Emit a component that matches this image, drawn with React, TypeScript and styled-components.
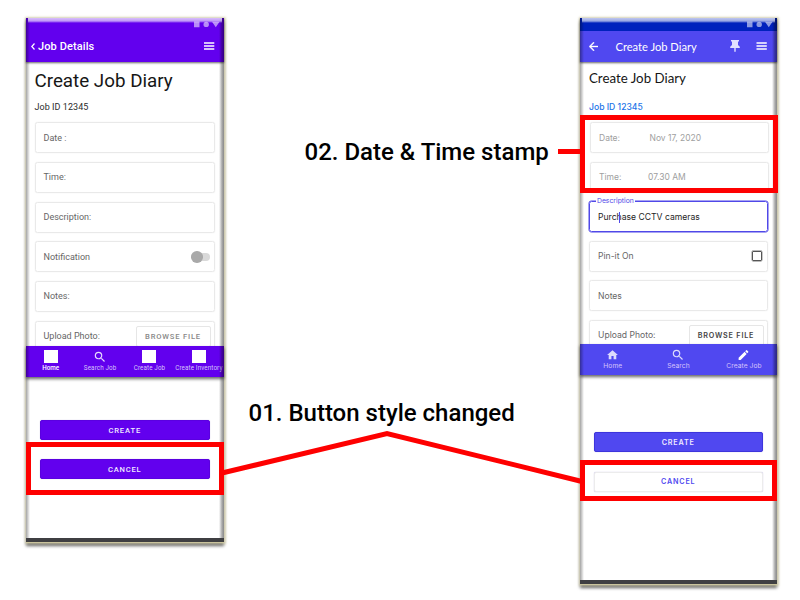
import React from "react";
import styled, { createGlobalStyle, css } from "styled-components";

const Global = createGlobalStyle`
  * { box-sizing: border-box; }
  body { margin: 0; background: #fff; }
`;

const roboto = 'Roboto, "Liberation Sans", sans-serif';
const inter = 'Inter, Roboto, sans-serif';
const lato = 'Lato, Roboto, sans-serif';

const Board = styled.main`
  position: relative;
  width: 800px;
  height: 600px;
  overflow: hidden;
  display: flex;
  justify-content: space-between;
  align-items: flex-start;
  padding: 18px 23px 0 26px;
  background: #fff;
  font-family: ${roboto};
`;

const Phone = styled.section<{ $w: number; $h: number; $font: string }>`
  position: relative;
  display: flex;
  flex-direction: column;
  width: ${(p) => p.$w}px;
  height: ${(p) => p.$h}px;
  background: #fff;
  font-family: ${(p) => p.$font};
  white-space: nowrap;
  box-shadow: 0 0 2px 1.5px rgba(214, 208, 168, 0.7), 0 1px 0 0 #b5af8a, 0 4px 3px 0 rgba(0, 0, 0, 0.6);
  &::after {
    content: "";
    position: absolute;
    inset: 0;
    pointer-events: none;
    background:
      linear-gradient(#3f3f42, #3f3f42) bottom / 100% 4px no-repeat,
      linear-gradient(rgba(255, 255, 255, 0.75), rgba(255, 255, 255, 0.6) 3px, transparent 5px) 2px 0 / calc(100% - 4px) 5px no-repeat,
      linear-gradient(to right, rgba(0, 0, 0, 0.36), rgba(0, 0, 0, 0.18) 2px, transparent 4px),
      linear-gradient(to left, rgba(0, 0, 0, 0.46), rgba(0, 0, 0, 0.34) 2px, transparent 5px);
  }
`;

const Header = styled.header<{ $color: string }>`
  flex: none;
  height: 43.5px;
  background: ${(p) => p.$color};
  color: #fff;
  box-shadow: 0 1px 2px rgba(0, 0, 0, 0.6);
`;

const StatusBar = styled.div<{ $color: string }>`
  height: 13px;
  background: ${(p) => p.$color};
  display: flex;
  justify-content: flex-end;
  padding: 3px 4px 0 0;
`;

const Toolbar = styled.div<{ $pad: string }>`
  height: 30.5px;
  display: flex;
  align-items: center;
  padding: ${(p) => p.$pad};
`;

const BarTitle = styled.h2<{ $size: number; $font: string; $weight: number; $ls: number; $ml: number }>`
  margin: 1px auto 0 ${(p) => p.$ml}px;
  font: ${(p) => p.$weight} ${(p) => p.$size}px/14px ${(p) => p.$font};
  letter-spacing: ${(p) => p.$ls}px;
`;

const Body = styled.div<{ $h: number; $x: number }>`
  flex: none;
  height: ${(p) => p.$h}px;
  overflow: hidden;
  padding: 0 9px 0 ${(p) => p.$x}px;
`;

const Title = styled.h1<{ $size: number; $font: string; $top: number; $ls: number }>`
  margin: ${(p) => p.$top}px 0 0;
  height: 24px;
  font: 400 ${(p) => p.$size}px/24px ${(p) => p.$font};
  letter-spacing: ${(p) => p.$ls}px;
  color: #161616;
`;

const JobId = styled.p<{ $top: number; $color: string; $ls: number; $size: number; $weight: number }>`
  margin: ${(p) => p.$top}px 0 0;
  height: 12px;
  line-height: 12px;
  font-size: ${(p) => p.$size}px;
  font-weight: ${(p) => p.$weight};
  letter-spacing: ${(p) => p.$ls}px;
  color: ${(p) => p.$color};
`;

const Fields = styled.div<{ $top: number; $gap: number }>`
  margin-top: ${(p) => p.$top}px;
  display: flex;
  flex-direction: column;
  gap: ${(p) => p.$gap}px;
`;

const Field = styled.div<{ $active?: boolean; $muted?: boolean; $shift?: number }>`
  position: relative;
  flex: none;
  display: flex;
  align-items: center;
  height: 31px;
  margin: 0 ${(p) => -(p.$shift ?? 0)}px 0 ${(p) => p.$shift ?? 0}px;
  padding: 0 8px;
  border: 1px solid #e9e9e9;
  border-radius: 2.5px;
  box-shadow: 0 0 1px rgba(0, 0, 0, 0.12);
  color: ${(p) => (p.$muted ? "#a0a0a0" : "#666")};
  ${(p) =>
    p.$active &&
    css`
      border-color: #5048e8;
      color: #242424;
      box-shadow: 0 0 0 0.5px #5048e8;
    `}
`;

const Label = styled.span<{ $size?: number; $ls?: number; $w?: number }>`
  font-size: ${(p) => p.$size ?? 9}px;
  line-height: 12px;
  letter-spacing: ${(p) => p.$ls ?? 0}px;
  ${(p) => p.$w && `width: ${p.$w}px;`}
`;

const Floating = styled.span`
  position: absolute;
  left: 6px;
  top: -6px;
  padding: 0 1px;
  background: #fff;
  font-size: 6.8px;
  line-height: 10px;
  color: #5048e8;
`;

const Caret = styled.i`
  position: absolute;
  left: 28.5px;
  top: 9.5px;
  width: 1px;
  height: 11px;
  background: #5048e8;
`;

const Toggle = styled.i`
  position: relative;
  margin-left: auto;
  margin-right: -4px;
  width: 17px;
  height: 7.5px;
  border-radius: 4px;
  background: #d9d9d9;
  &::before {
    content: "";
    position: absolute;
    left: -2px;
    top: -2px;
    width: 11.5px;
    height: 11.5px;
    border-radius: 50%;
    background: #a9a9a9;
  }
`;

const CheckBox = styled.i`
  margin-left: auto;
  margin-right: -3px;
  width: 10px;
  height: 10px;
  border: 1px solid #555;
  border-radius: 1px;
  box-shadow: 0 0 0 0.4px #777;
`;

const Browse = styled.button<{ $color: string; $weight: number; $ls: number; $size: number; $mr: number }>`
  align-self: flex-start;
  margin: 4.5px ${(p) => p.$mr}px 0 auto;
  width: 75px;
  height: 21px;
  padding: 0;
  border: 1px solid #e6e6e6;
  border-radius: 2px;
  background: #fff;
  font-family: inherit;
  font-size: ${(p) => p.$size}px;
  font-weight: ${(p) => p.$weight};
  letter-spacing: ${(p) => p.$ls}px;
  color: ${(p) => p.$color};
`;

const Nav = styled.nav<{ $color: string; $cols: string }>`
  position: relative;
  flex: none;
  height: 31.5px;
  display: grid;
  grid-template-columns: ${(p) => p.$cols};
  background: ${(p) => p.$color};
  box-shadow: 0 2px 3px rgba(0, 0, 0, 0.6);
`;

const NavItem = styled.a<{ $active?: boolean; $ls: number; $size?: number }>`
  display: flex;
  flex-direction: column;
  align-items: center;
  padding-top: 4px;
  color: ${(p) => (p.$active ? "#fff" : "#d5c2fb")};
  font-size: ${(p) => p.$size ?? 6.3}px;
  font-weight: ${(p) => (p.$active ? 500 : 400)};
  line-height: 9px;
  letter-spacing: ${(p) => p.$ls}px;
  svg { display: block; height: 14px; }
`;

const Tile = styled.i`
  width: 14px;
  height: 13px;
  margin-bottom: 1px;
  background: #fff;
`;

const Actions = styled.div<{ $top: number; $gap: number }>`
  margin-top: ${(p) => p.$top}px;
  padding: 0 14px 0 13.5px;
  display: flex;
  flex-direction: column;
  gap: ${(p) => p.$gap}px;
`;

const Action = styled.button<{ $bg: string; $fg?: string; $edge: string; $ls: number; $size: number; $weight?: number }>`
  height: 20px;
  padding: 0;
  border: 1px solid ${(p) => p.$edge};
  border-radius: 2px;
  background: ${(p) => p.$bg};
  color: ${(p) => p.$fg ?? "#f0eaff"};
  font-family: inherit;
  font-size: ${(p) => p.$size}px;
  font-weight: ${(p) => p.$weight ?? 500};
  letter-spacing: ${(p) => p.$ls}px;
  box-shadow: 0 0 1px rgba(60, 40, 160, 0.4);
`;

const Mark = styled.div<{ $x: number; $y: number; $w: number; $h: number }>`
  position: absolute;
  left: ${(p) => p.$x}px;
  top: ${(p) => p.$y}px;
  width: ${(p) => p.$w}px;
  height: ${(p) => p.$h}px;
  border: 5px solid #fe0000;
`;

const Lines = styled.svg`
  position: absolute;
  left: 0;
  top: 0;
`;

const Note = styled.p<{ $x: number; $y: number; $ls: number }>`
  position: absolute;
  left: ${(p) => p.$x}px;
  top: ${(p) => p.$y}px;
  margin: 0;
  font: 500 24px/28px ${roboto};
  letter-spacing: ${(p) => p.$ls}px;
  color: #000;
  white-space: nowrap;
`;

const StatusGlyphs = () => (
  <svg width="27" height="7" viewBox="0 0 27 7" fill="#fff" fillOpacity=".55">
    <path d="M1 .5h5.5v5.7H1zM19 .8h7.5L22.8 6.2z" />
    <circle cx="13.2" cy="3.4" r="2.7" />
  </svg>
);

const Burger = () => (
  <svg width="11" height="8" viewBox="0 0 11 8" stroke="#fff" strokeWidth="1.5">
    <path d="M0 1h10.3M0 4h10.3M0 7h10.3" />
  </svg>
);

const SearchIcon = ({ color }: { color: string }) => (
  <svg width="14" height="14" viewBox="0 0 24 24" fill={color}>
    <path d="M15.5 14h-.79l-.28-.27A6.47 6.47 0 0 0 16 9.5 6.5 6.5 0 1 0 9.5 16c1.61 0 3.09-.59 4.23-1.57l.27.28v.79l5 4.99L20.49 19l-4.99-5zm-6 0C7.01 14 5 11.99 5 9.5S7.01 5 9.5 5 14 7.01 14 9.5 11.99 14 9.5 14z" />
  </svg>
);

const HomeIcon = () => (
  <svg width="13" height="13" viewBox="0 0 24 24" fill="#dcdafc">
    <path d="M10 20v-6h4v6h5v-8h3L12 3 2 12h3v8z" />
  </svg>
);

const PencilIcon = () => (
  <svg width="13" height="13" viewBox="0 0 24 24" fill="#fff">
    <path d="M3 17.25V21h3.75L17.81 9.94l-3.75-3.75L3 17.25zM20.71 7.04a1 1 0 0 0 0-1.41l-2.34-2.34a1 1 0 0 0-1.41 0l-1.83 1.83 3.75 3.75 1.83-1.83z" />
  </svg>
);

const OldScreen = () => (
  <Phone $w={198} $h={524} $font={roboto}>
    <Header $color="#6200ee">
      <StatusBar $color="#6200ee"><StatusGlyphs /></StatusBar>
      <Toolbar $pad="0 9.5px 0 4.5px">
        <svg width="4" height="7" viewBox="0 0 4 7" fill="none" stroke="#fff" strokeWidth="1.2"><path d="M3.5.5L.8 3.5l2.7 3" /></svg>
        <BarTitle $size={11} $font={roboto} $weight={500} $ls={0.1} $ml={3.5}>Job Details</BarTitle>
        <Burger />
      </Toolbar>
    </Header>
    <Body $h={284} $x={8.5}>
      <Title $size={18.8} $font={roboto} $top={7.5} $ls={0}>Create Job Diary</Title>
      <JobId $top={8} $color="#2c2c2c" $ls={0.05} $size={9} $weight={400}>Job ID 12345</JobId>
      <Fields $top={9.2} $gap={8.7}>
        <Field><Label>Date :</Label></Field>
        <Field><Label>Time:</Label></Field>
        <Field><Label>Description:</Label></Field>
        <Field><Label>Notification</Label><Toggle /></Field>
        <Field><Label>Notes:</Label></Field>
        <Field><Label>Upload Photo:</Label><Browse $color="#888" $weight={500} $ls={0.8} $size={7.6} $mr={-4.5}>BROWSE FILE</Browse></Field>
      </Fields>
    </Body>
    <Nav $color="#6200ee" $cols="repeat(4, 49.4px)">
      <NavItem $active $ls={0}><Tile />Home</NavItem>
      <NavItem $ls={0.1}><SearchIcon color="#e6d9fd" />Search Job</NavItem>
      <NavItem $ls={0.1}><Tile />Create Job</NavItem>
      <NavItem $ls={0.1}><Tile />Create Inventory</NavItem>
    </Nav>
    <Actions $top={43.3} $gap={19.2}>
      <Action $bg="#6200ee" $edge="#5a00e0" $ls={0.85} $size={7.6}>CREATE</Action>
      <Action $bg="#6200ee" $edge="#5a00e0" $ls={0.8} $size={7.6}>CANCEL</Action>
    </Actions>
  </Phone>
);

const NewScreen = () => (
  <Phone $w={197} $h={566} $font={inter}>
    <Header $color="#5048f0">
      <StatusBar $color="#0021bd"><StatusGlyphs /></StatusBar>
      <Toolbar $pad="0 10px 0 8.5px">
        <svg width="9" height="9" viewBox="4 4 16 16" fill="#fff" stroke="#fff" strokeWidth=".6"><path d="M20 11H7.83l5.59-5.59L12 4l-8 8 8 8 1.41-1.41L7.83 13H20v-2z" /></svg>
        <BarTitle $size={11.15} $font={lato} $weight={400} $ls={0} $ml={18}>Create Job Diary</BarTitle>
        <svg width="10" height="12" viewBox="0 0 10 12" fill="#e2e0ff"><path d="M1 0h8v1.5H8V5l1.8 1.7V8H5.7v3.5L5 12l-.7-.5V8H.2V6.7L2 5V1.5H1z" /></svg>
        <svg width="27" height="8" viewBox="-16.5 0 27 8" stroke="#fff" strokeWidth="1.5"><path d="M0 1h10.3M0 4h10.3M0 7h10.3" /></svg>
      </Toolbar>
    </Header>
    <Body $h={282.3} $x={9}>
      <Title $size={13.3} $font={lato} $top={4} $ls={0}>Create Job Diary</Title>
      <JobId $top={11} $color="#1a73e8" $ls={0} $size={8.6} $weight={500}>Job ID 12345</JobId>
      <Fields $top={9.5} $gap={8.6}>
        <Field $muted $shift={1}><Label $w={50.5} $size={8.5}>Date:</Label><Label $size={8.5}>Nov 17, 2020</Label></Field>
        <Field $muted $shift={1}><Label $w={49} $size={8.5}>Time:</Label><Label $size={8.5}>07.30 AM</Label></Field>
        <Field $active><Floating>Description</Floating><Label $size={8.6}>Purchase CCTV cameras</Label><Caret /></Field>
        <Field><Label $size={8.6}>Pin-it On</Label><CheckBox /></Field>
        <Field><Label $size={8.6}>Notes</Label></Field>
        <Field><Label $size={8.6}>Upload Photo:</Label><Browse $color="#444" $weight={600} $ls={0.8} $size={7.2} $mr={-4.5}>BROWSE FILE</Browse></Field>
      </Fields>
    </Body>
    <Nav $color="#5048f0" $cols="repeat(3, 65.6px)">
      <NavItem $ls={0.05} $size={6.7}><HomeIcon />Home</NavItem>
      <NavItem $ls={0.05} $size={6.7}><SearchIcon color="#dcdafc" />Search</NavItem>
      <NavItem $ls={0.05} $size={6.7}><PencilIcon />Create Job</NavItem>
    </Nav>
    <Actions $top={57.2} $gap={19.5}>
      <Action $bg="#5048f0" $edge="#3d35dc" $ls={0.85} $size={7.2} $weight={600}>CREATE</Action>
      <Action $bg="#fff" $fg="#5048f0" $edge="#ececec" $ls={0.8} $size={7.2} $weight={600}>CANCEL</Action>
    </Actions>
  </Phone>
);

export default function App() {
  return (
    <>
      <Global />
      <Board>
        <OldScreen />
        <NewScreen />
        <Note $x={304.5} $y={138} $ls={0}>02. Date &amp; Time stamp</Note>
        <Note $x={248.5} $y={399} $ls={0}>01. Button style changed</Note>
        <Lines width="800" height="600" viewBox="0 0 800 600" fill="none" stroke="#fe0000" strokeWidth="5">
          <path d="M558 151.5H582M222 473L387 433.5L582 481.5" />
        </Lines>
        <Mark $x={26} $y={442} $w={198} $h={53} />
        <Mark $x={580} $y={115} $w={198} $h={78} />
        <Mark $x={580} $y={460} $w={197} $h={41} />
      </Board>
    </>
  );
}
